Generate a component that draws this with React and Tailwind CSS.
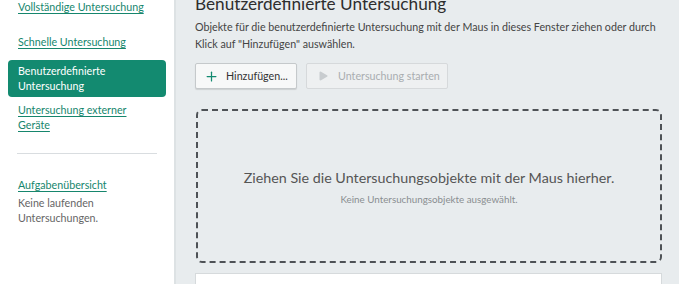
import { Plus, Play } from "lucide-react";

function SideLink({ children, className = "" }) {
  return (
    <a href="#" className={`block text-[#16866d] underline underline-offset-2 decoration-[#16866d] whitespace-nowrap ${className}`}>
      {children}
    </a>
  );
}

export default function App() {
  return (
    <div
      className="h-[284px] w-[679px] overflow-hidden flex bg-[#e8ecee] text-[10.7px]"
      style={{ fontFamily: 'Lato, "Open Sans", sans-serif' }}
    >
      {/* SIDEBAR */}
      <div className="w-[176px] shrink-0 bg-white border-r-2 border-[#dde2e4]">
        <div className="-mt-[1px]">
          <div className="px-[18px] leading-[15px]">
            <SideLink>Vollständige Untersuchung</SideLink>
          </div>
          <div className="px-[18px] leading-[15px] mt-[20px]">
            <SideLink>Schnelle Untersuchung</SideLink>
          </div>
          <div className="mx-[8px] mt-[11px] rounded-[4px] bg-[#138a70] text-white px-[10px] py-[4px] leading-[14.5px] whitespace-nowrap">
            Benutzerdefinierte
            <br />
            Untersuchung
          </div>
          <div className="px-[18px] leading-[14.5px] mt-[6px]">
            <SideLink>
              Untersuchung externer
              <br />
              Geräte
            </SideLink>
          </div>
          <div className="mx-[17px] mt-[21px] h-px bg-[#d9dde0] w-[140px]" />
          <div className="px-[18px] leading-[15px] mt-[23px]">
            <SideLink>Aufgabenübersicht</SideLink>
          </div>
          <div className="px-[18px] leading-[15px] mt-[3px] text-[#666] whitespace-nowrap">
            Keine laufenden
            <br />
            Untersuchungen.
          </div>
        </div>
      </div>

      {/* MAIN */}
      <div className="flex-1 pl-[19px] pr-[16px]">
        <h1 className="text-[17.2px] leading-[20px] text-[#2e2e2e] -mt-[6px] whitespace-nowrap">
          Benutzerdefinierte Untersuchung
        </h1>
        <p className="mt-[4px] leading-[17px] text-[#444] whitespace-nowrap">
          Objekte für die benutzerdefinierte Untersuchung mit der Maus in dieses Fenster ziehen oder durch
          <br />
          Klick auf "Hinzufügen" auswählen.
        </p>

        <div className="flex gap-[9px] mt-[11px]">
          <button className="h-[26px] w-[102px] flex items-center gap-[7px] pl-[8px] bg-[#f7f8f8] border border-[#c5c9cb] rounded-[2px] shadow-[0_1px_1px_rgba(0,0,0,0.12)] text-[#333] whitespace-nowrap">
            <Plus size={15} strokeWidth={2} className="text-[#138a70]" />
            <span>Hinzufügen...</span>
          </button>
          <button className="h-[26px] w-[142px] flex items-center gap-[9px] pl-[10px] bg-[#eef0f1] border border-[#d6d9db] rounded-[2px] text-[#a9adb0] whitespace-nowrap">
            <Play size={12} fill="#c8cccf" strokeWidth={0} />
            <span>Untersuchung starten</span>
          </button>
        </div>

        <div className="mt-[20px] ml-[1px] w-[466px] h-[154px] border-2 border-dashed border-[#4e5256] rounded-[6px] flex flex-col items-center justify-center">
          <div className="text-[14.3px] leading-[20px] text-[#555] mt-[2px] whitespace-nowrap">
            Ziehen Sie die Untersuchungsobjekte mit der Maus hierher.
          </div>
          <div className="text-[9.8px] leading-[14px] text-[#8a8e91] mt-[4px] whitespace-nowrap">
            Keine Untersuchungsobjekte ausgewählt.
          </div>
        </div>

        <div className="mt-[10px] w-[467px] h-[40px] bg-white border border-[#d6dadc]" />
      </div>
    </div>
  );
}
